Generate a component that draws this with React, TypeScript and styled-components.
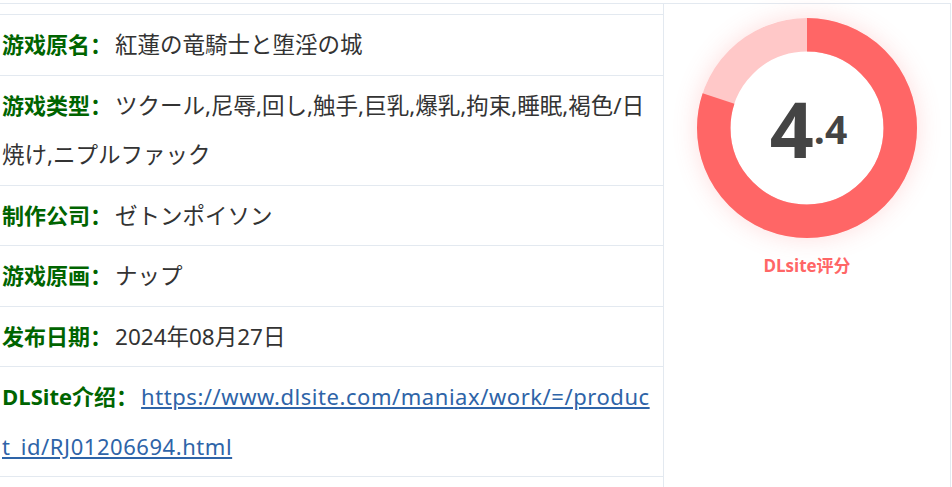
import React from "react";
import styled, { createGlobalStyle } from "styled-components";

const GlobalStyle = createGlobalStyle`
  html, body { margin: 0; padding: 0; background: #fff; }
  body { font-family: "Noto Sans", "Noto Sans CJK SC", sans-serif; }
`;

const LINE = "#e3e9f0";

const Page = styled.div`
  padding-top: 3px;
  width: 951px;
`;

const Board = styled.div`
  display: grid;
  grid-template-columns: 664px 287px;
  border-top: 1px solid ${LINE};
`;

const InfoCell = styled.div`
  border-right: 1px solid ${LINE};
  padding-top: 10px;
  min-height: 500px;
`;

const InfoRow = styled.div`
  border-top: 1px solid ${LINE};
  padding: 5px 10px 5px 2px;
  line-height: 49.5px;
  font-size: 22px;
  color: #333;
  word-break: break-all;
  &:last-child {
    border-bottom: 1px solid ${LINE};
  }
`;

const Label = styled.span`
  font-family: "Open Sans", "Noto Sans CJK SC", sans-serif;
  font-weight: 700;
  color: #006400;
  margin-right: 3px;
`;

const Value = styled.span`
  font-family: "Noto Sans", "Noto Sans CJK JP", sans-serif;
  font-size: 22.5px;
`;

const Link = styled.a`
  font-family: "Noto Sans", sans-serif;
  color: #2e64a8;
  text-decoration: underline;
  letter-spacing: 0.55px;
`;

const ScoreCell = styled.div`
  border-right: 1px solid ${LINE};
  display: flex;
  flex-direction: column;
  align-items: center;
  padding-top: 14px;
`;

const Donut = styled.div`
  position: relative;
  width: 220px;
  height: 220px;
  border-radius: 50%;
  box-shadow: 0 0 24px rgba(255, 102, 102, 0.22);
`;

const ScoreText = styled.div`
  position: absolute;
  inset: 0;
  display: flex;
  align-items: center;
  justify-content: center;
  font-family: "Open Sans", "Liberation Sans", sans-serif;
  font-weight: 700;
  color: #444;
  line-height: 1;
  padding-left: 3px;
`;

const BigDigit = styled.span`
  font-size: 77px;
`;

const SmallDigit = styled.span`
  font-size: 39px;
  vertical-align: 14px;
`;

const ScoreCaption = styled.div`
  margin-top: 14px;
  font-family: "Open Sans", "Noto Sans CJK SC", sans-serif;
  font-weight: 700;
  font-size: 17px;
  color: #ff6666;
`;

const rows: { label: string; value: React.ReactNode }[] = [
  { label: "游戏原名：", value: <Value>紅蓮の竜騎士と堕淫の城</Value> },
  {
    label: "游戏类型：",
    value: (
      <Value>ツクール,尼辱,回し,触手,巨乳,爆乳,拘束,睡眠,褐色/日焼け,ニプルファック</Value>
    ),
  },
  { label: "制作公司：", value: <Value>ゼトンポイソン</Value> },
  { label: "游戏原画：", value: <Value>ナップ</Value> },
  { label: "发布日期：", value: <Value>2024年08月27日</Value> },
  {
    label: "DLSite介绍：",
    value: (
      <Link href="#">https://www.dlsite.com/maniax/work/=/product_id/RJ01206694.html</Link>
    ),
  },
];

const R = 93.25;
const C = 2 * Math.PI * R;
const red = C * 0.8;

export default function App() {
  return (
    <Page>
      <GlobalStyle />
      <Board>
        <InfoCell>
          {rows.map((r) => (
            <InfoRow key={r.label}>
              <Label>{r.label}</Label>
              {r.value}
            </InfoRow>
          ))}
        </InfoCell>
        <ScoreCell>
          <Donut>
            <svg width="220" height="220" viewBox="0 0 220 220">
              <circle cx="110" cy="110" r={R} fill="none" stroke="#ffc8c8" strokeWidth="33.5" />
              <circle
                cx="110"
                cy="110"
                r={R}
                fill="none"
                stroke="#ff6666"
                strokeWidth="33.5"
                strokeDasharray={`${red} ${C}`}
                transform="rotate(-90 110 110)"
              />
            </svg>
            <ScoreText>
              <span>
                <BigDigit>4</BigDigit>
                <SmallDigit>.4</SmallDigit>
              </span>
            </ScoreText>
          </Donut>
          <ScoreCaption>DLsite评分</ScoreCaption>
        </ScoreCell>
      </Board>
    </Page>
  );
}
